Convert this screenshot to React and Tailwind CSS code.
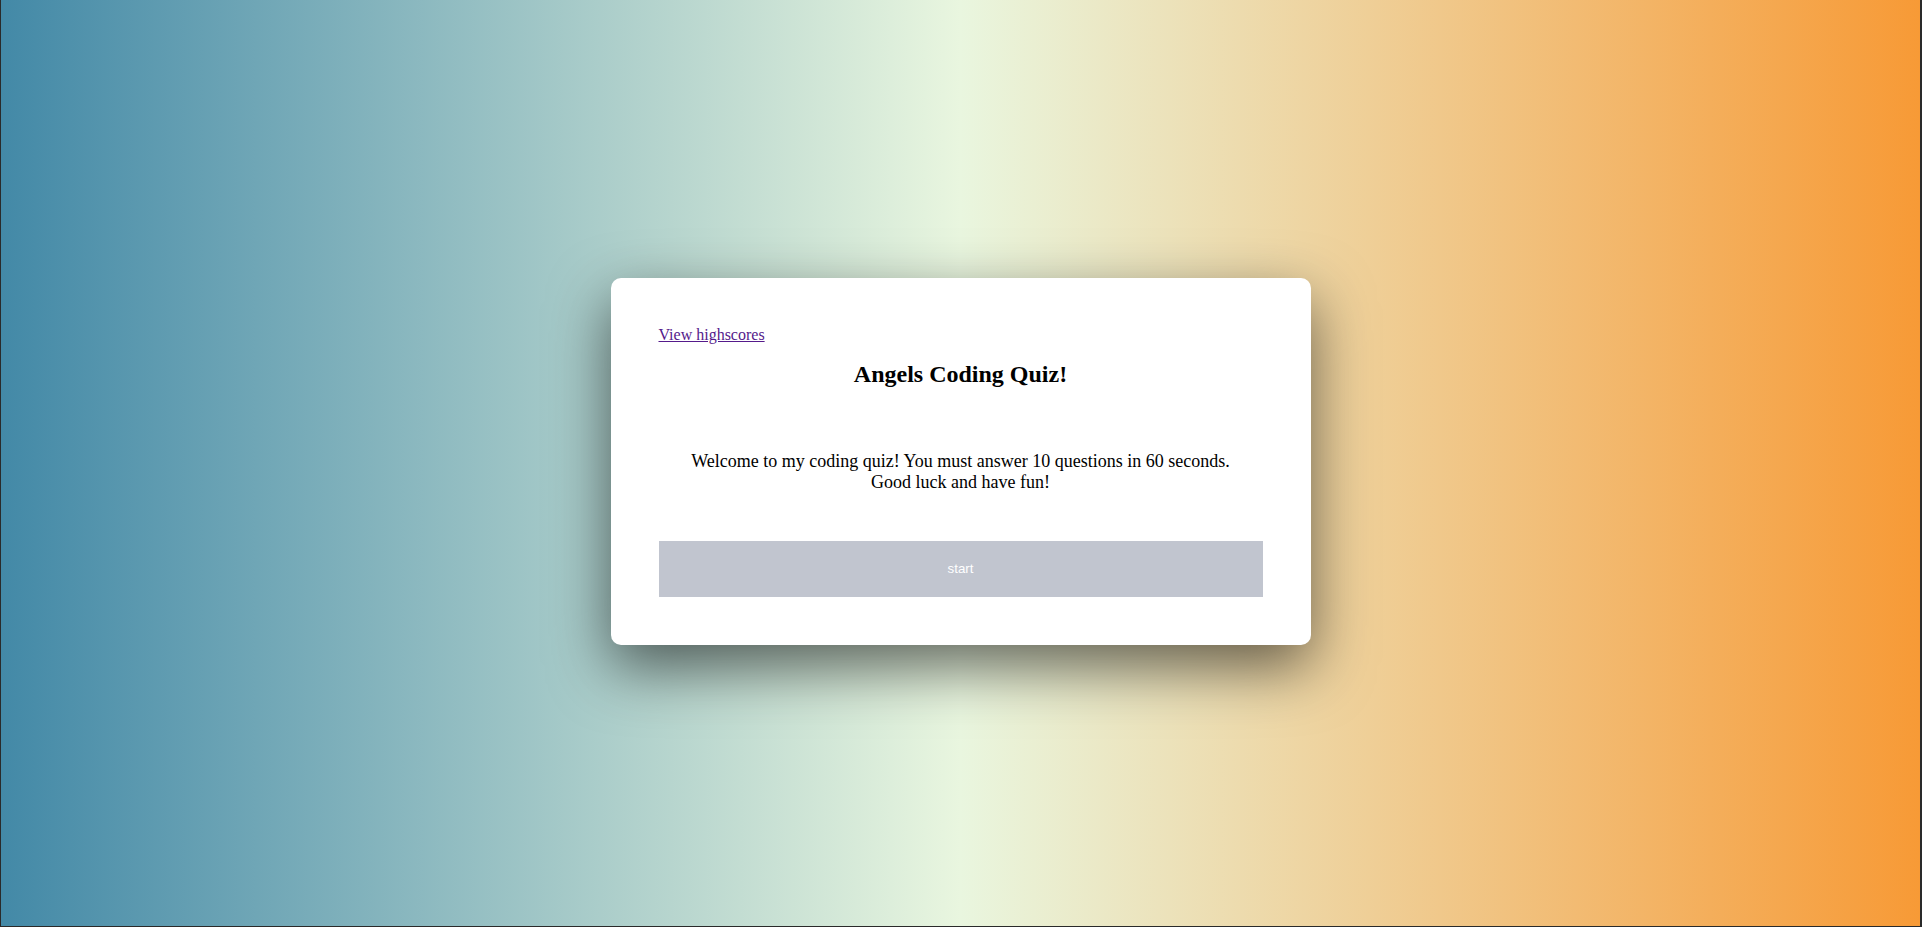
import React from 'react';

export default function App() {
    return (
        <div className="h-[927px] w-full flex items-center justify-center bg-[linear-gradient(to_right,#4389a7,#e9f6df,#f79a36)] border-l border-r-2 border-b border-[#2a2a2a] font-['Liberation_Serif',serif] text-black">
            <div className="w-[700px] bg-white rounded-[10px] p-12 shadow-[0_22px_60px_rgba(0,0,0,0.58)] -mt-[4px]">
                {/* Highscores link */}
                <a href="#" className="block w-fit text-base leading-[18px] text-[#551a8b] underline">
                    View highscores
                </a>

                <h2 className="mt-[17px] text-2xl leading-[27px] font-bold text-center">
                    Angels Coding Quiz!
                </h2>

                <p className="mt-[63px] text-lg leading-[21px] text-center">
                    Welcome to my coding quiz! You must answer 10 questions in 60 seconds.
                    <br />
                    Good luck and have fun!
                </p>

                <button className="mt-[48px] w-full h-14 bg-[#c1c5cf] text-white text-[13.333px] font-['Liberation_Sans',sans-serif]">
                    start
                </button>
            </div>
        </div>
    );
}
